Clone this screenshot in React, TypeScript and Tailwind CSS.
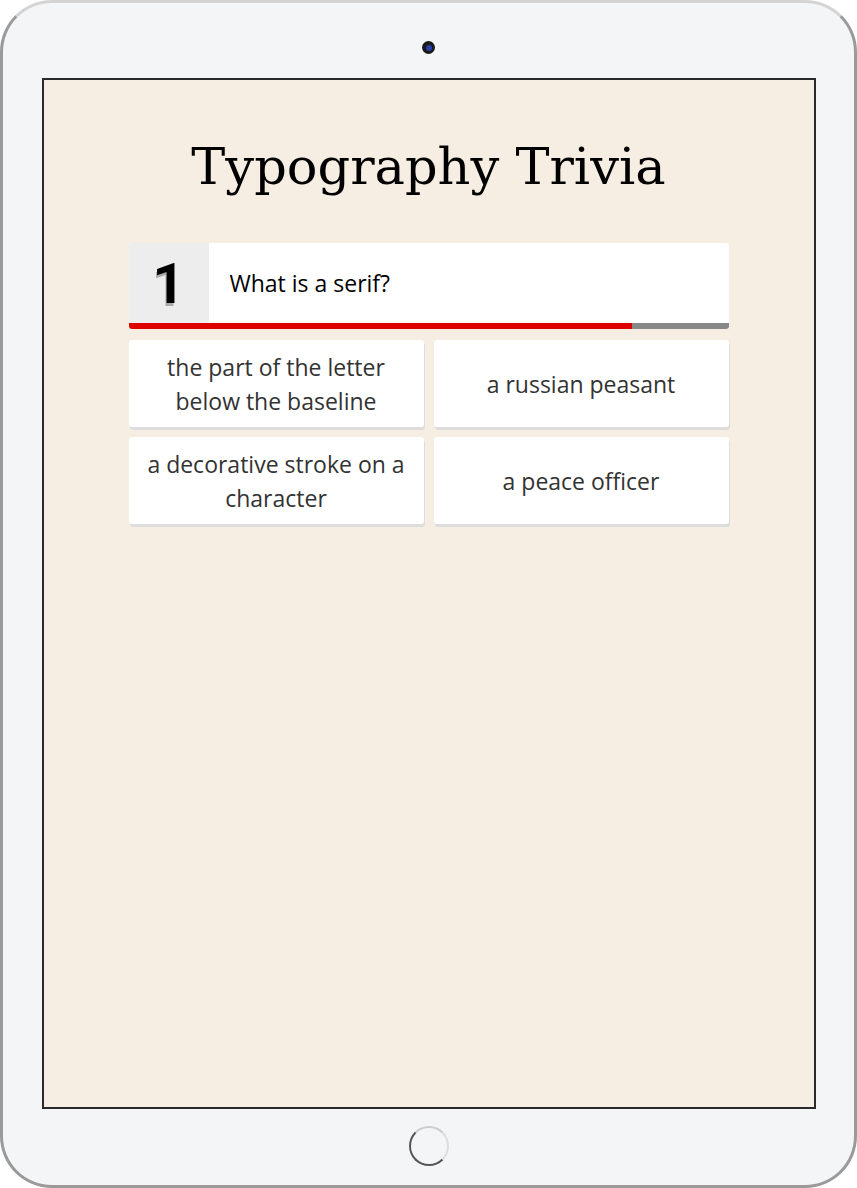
import React from "react"

const answers = [
  "the part of the letter below the baseline",
  "a russian peasant",
  "a decorative stroke on a character",
  "a peace officer",
]

export default function App() {
  return (
    <div className="w-[857px] h-[1188px] bg-white">
      {/* tablet frame */}
      <div className="relative w-[857px] h-[1188px] rounded-[52px] border-[3px] border-[#9a9a9a] border-t-[#d4d4d4] bg-[#f4f5f7] flex flex-col items-center">
        <div className="mt-[38px] w-[13px] h-[13px] rounded-full bg-[#1a1a1a] flex items-center justify-center">
          <div className="w-[6px] h-[6px] rounded-full bg-[#2b3fa8]" />
        </div>

        {/* screen */}
        <div className="mt-[24px] w-[774px] h-[1031px] border-2 border-[#2a2a2a] bg-[#f6eee2] flex flex-col items-center">
          <h1 className="mt-[52px] text-[51px] leading-[70px] text-black font-['DejaVu_Serif',serif]">
            Typography Trivia
          </h1>

          <div className="mt-[41px] w-[600px] font-['Open_Sans',sans-serif]">
            <div className="rounded-[3px] bg-white overflow-hidden">
              <div className="flex h-[80px]">
                <div className="w-[80px] bg-[#ededed] flex items-center justify-center pt-[2px] text-[56px] leading-none font-bold text-black font-['Roboto',sans-serif] [text-shadow:-1px_3px_0_#aaa]">
                  1
                </div>
                <div className="flex items-center pl-[21px] text-[23px] text-black">What is a serif?</div>
              </div>
              <div className="flex h-[6px]">
                <div className="w-[503px] bg-[#dd0000]" />
                <div className="flex-1 bg-[#888888]" />
              </div>
            </div>

            <div className="mt-[11px] grid grid-cols-2 gap-x-[10px] gap-y-[10px]">
              {answers.map((a) => (
                <div
                  key={a}
                  className="h-[87px] rounded-[3px] bg-white shadow-[1px_3px_0_#dddddd] flex items-center justify-center px-[16px] text-center text-[23px] leading-[34px] text-[#333]"
                >
                  {a}
                </div>
              ))}
            </div>
          </div>
        </div>

        {/* home button */}
        <div className="mt-[17px] w-[40px] h-[40px] rounded-full border-2 border-[#555] border-t-[#ccc] border-r-[#ddd]" />
      </div>
    </div>
  )
}
